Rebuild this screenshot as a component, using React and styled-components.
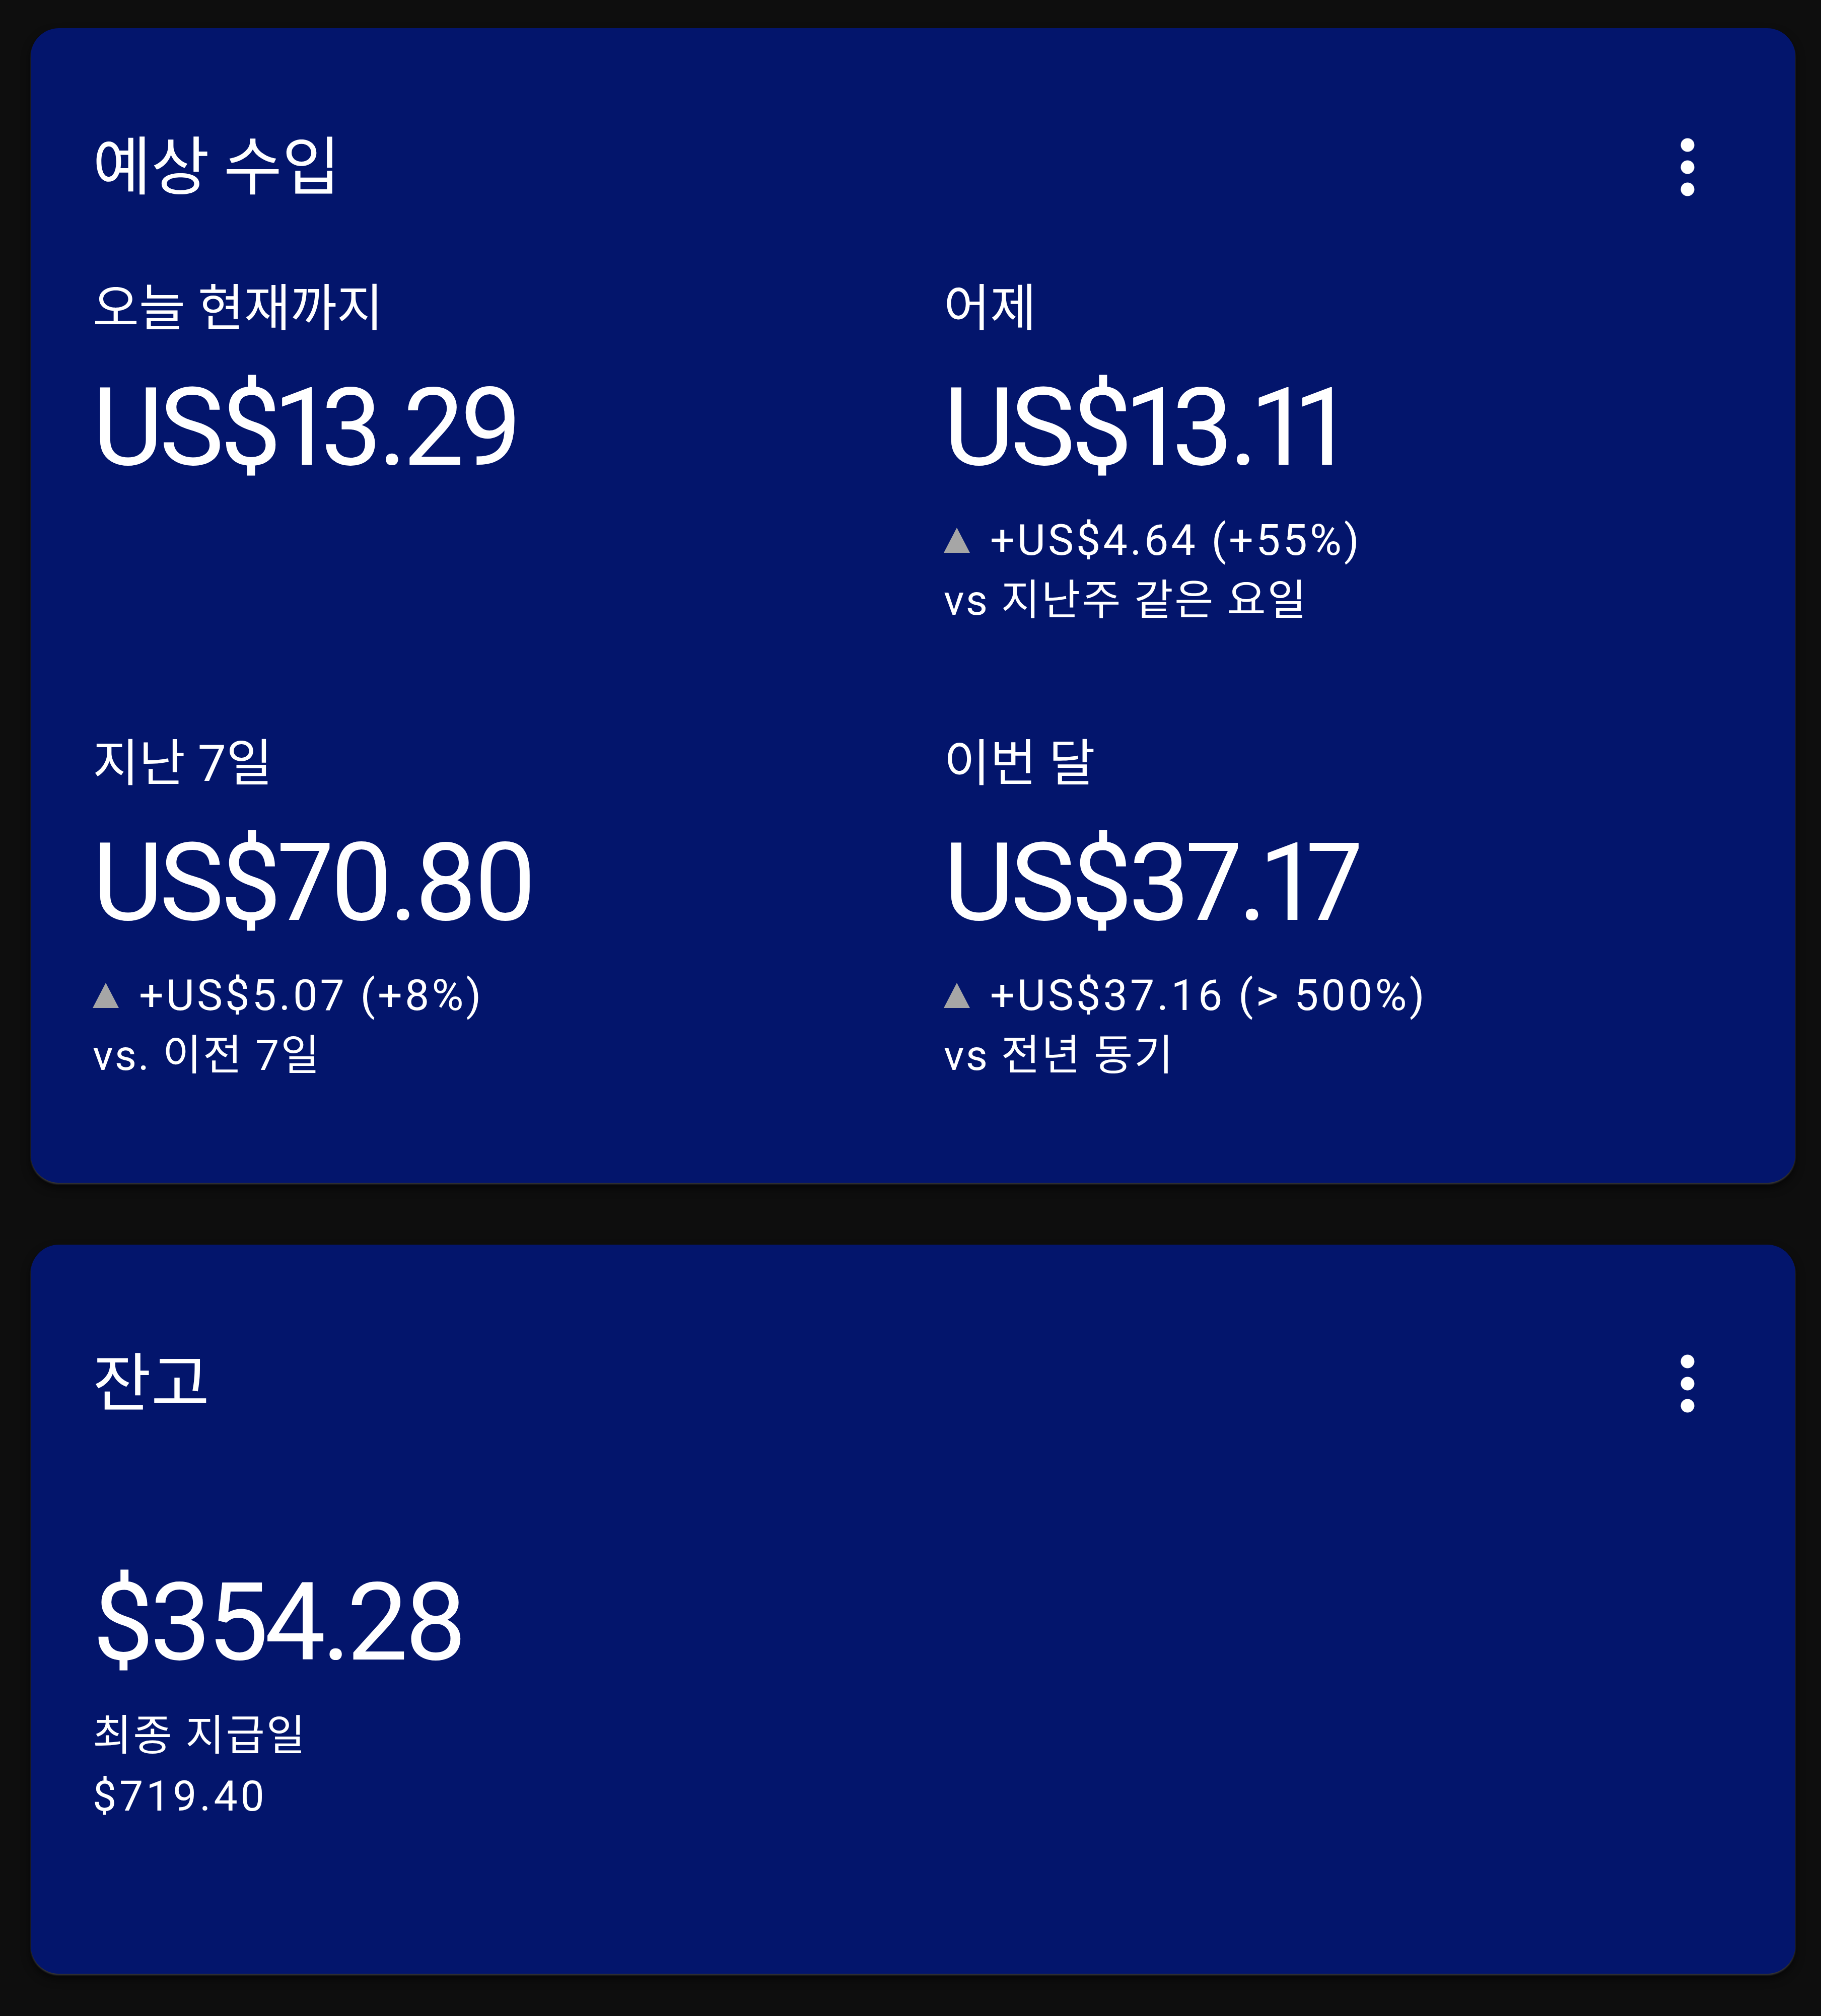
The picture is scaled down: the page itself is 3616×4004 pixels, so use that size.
import React from "react";
import styled, { createGlobalStyle } from "styled-components";

const GlobalStyle = createGlobalStyle`
  html, body {
    margin: 0;
    padding: 0;
    background: #0e0e0e;
  }

  body {
    font-family: Roboto, "Noto Sans CJK KR", sans-serif;
    color: #fff;
  }
`;

const Page = styled.main`
  min-height: 4004px;
  box-sizing: border-box;
  padding: 56px 51px 0 61px;
  display: flex;
  flex-direction: column;
  gap: 123px;
`;

const Card = styled.section`
  background: #03156c;
  border-radius: 56px;
  padding: 150px 123px ${(p) => p.$bottom}px;
  box-shadow: 0 3px 3px rgba(140, 140, 150, 0.35), 0 10px 18px rgba(0, 0, 0, 0.6);
`;

const Header = styled.div`
  display: flex;
  align-items: center;
  justify-content: space-between;
  height: 240px;
`;

const Title = styled.h2`
  margin: 0 0 10px;
  font-family: "Noto Sans CJK KR", Roboto, sans-serif;
  font-size: 126px;
  font-weight: 400;
  line-height: 160px;
`;

const MenuButton = styled.button`
  width: 182px;
  height: 182px;
  padding: 0;
  border: 0;
  background: none;
  display: flex;
  align-items: center;
  justify-content: center;
`;

const Stats = styled.div`
  display: grid;
  grid-template-columns: 1fr 1fr;
  column-gap: 122px;
  row-gap: 199px;
  margin-top: 102px;
`;

const Stat = styled.div`
  display: flex;
  flex-direction: column;
`;

const Label = styled.div`
  font-size: 100px;
  line-height: 130px;
`;

const Value = styled.div`
  margin-top: ${(p) => p.$top}px;
  font-family: Roboto, sans-serif;
  font-size: 216px;
  line-height: 260px;
  letter-spacing: -0.035em;
  font-variant-numeric: proportional-nums;
`;

const Delta = styled.div`
  margin-top: 33px;
  display: flex;
  align-items: center;
  gap: 40px;
  font-size: 86px;
  line-height: 120px;
  letter-spacing: 0.06em;
`;

const Up = styled.span`
  width: 0;
  height: 0;
  border-left: 26px solid transparent;
  border-right: 26px solid transparent;
  border-bottom: 50px solid #a6a6a6;
`;

const Note = styled.div`
  margin-top: ${(p) => p.$top || 0}px;
  font-size: 84px;
  line-height: 120px;
  letter-spacing: ${(p) => (p.$amount ? "0.07em" : "0.035em")};
`;

const stats = [
  { label: "오늘 현재까지", value: "US$13.29" },
  {
    label: "어제",
    value: "US$13.11",
    delta: "+US$4.64 (+55%)",
    note: "vs 지난주 같은 요일",
  },
  {
    label: "지난 7일",
    value: "US$70.80",
    delta: "+US$5.07 (+8%)",
    note: "vs. 이전 7일",
  },
  {
    label: "이번 달",
    value: "US$37.17",
    delta: "+US$37.16 (> 500%)",
    note: "vs 전년 동기",
  },
];

function Kebab() {
  return (
    <MenuButton aria-label="더보기">
      <svg width="182" height="182" viewBox="0 0 182 182">
        <circle cx="91" cy="53" r="13.5" fill="#fff" />
        <circle cx="91" cy="97" r="13.5" fill="#fff" />
        <circle cx="91" cy="141" r="13.5" fill="#fff" />
      </svg>
    </MenuButton>
  );
}

export default function App() {
  return (
    <>
      <GlobalStyle />
      <Page>
        <Card $bottom={192}>
          <Header>
            <Title>예상 수입</Title>
            <Kebab />
          </Header>
          <Stats>
            {stats.map((s) => (
              <Stat key={s.label}>
                <Label>{s.label}</Label>
                <Value $top={42}>{s.value}</Value>
                {s.delta && (
                  <>
                    <Delta>
                      <Up />
                      <span>{s.delta}</span>
                    </Delta>
                    <Note>{s.note}</Note>
                  </>
                )}
              </Stat>
            ))}
          </Stats>
        </Card>

        <Card $bottom={292}>
          <Header>
            <Title>잔고</Title>
            <Kebab />
          </Header>
          <Value $top={231}>$354.28</Value>
          <Note $top={35}>최종 지급일</Note>
          <Note $amount>$719.40</Note>
        </Card>
      </Page>
    </>
  );
}
